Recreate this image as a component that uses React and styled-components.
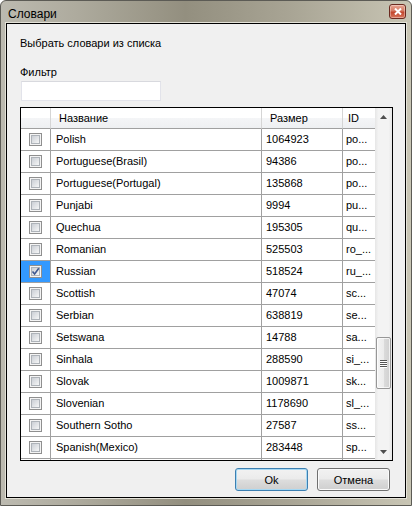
import styled, { createGlobalStyle } from "styled-components";

const GlobalStyle = createGlobalStyle`
  html, body {
    margin: 0;
    padding: 0;
    background: #fff;
  }
  body {
    font-family: "Liberation Sans", Arial, sans-serif;
    font-size: 11px;
    color: #000;
  }
`;

const Window = styled.div`
  width: 412px;
  height: 506px;
  box-sizing: border-box;
  display: flex;
  flex-direction: column;
  padding: 0 5px 7px 5px;
  border: 1px solid #5c5b55;
  border-radius: 6px 6px 0 0;
  background: linear-gradient(
    90deg,
    #bcbab0 0%,
    #aeab9e 18%,
    #938f7f 45%,
    #a8a494 70%,
    #c8c5b4 100%
  );
`;

const TitleBar = styled.div`
  height: 22px;
  display: flex;
  align-items: flex-start;
  justify-content: space-between;
`;

const Title = styled.span`
  font-size: 12px;
  margin: 6px 0 0 2px;
  color: #000;
`;

const CloseButton = styled.div`
  width: 17px;
  height: 15px;
  margin: 3px 0 0 0;
  box-sizing: border-box;
  border: 1px solid #6b2a20;
  border-radius: 3px;
  background: linear-gradient(180deg, #e8a493 0%, #d47a63 45%, #c2452c 55%, #d8765c 100%);
  display: flex;
  align-items: center;
  justify-content: center;
  box-shadow: inset 0 0 0 1px rgba(255, 255, 255, 0.35);
`;

const Client = styled.div`
  flex: 1;
  display: flex;
  flex-direction: column;
  background: #f0f0f0;
  border: 1px solid #000;
  box-shadow: 0 0 0 1px #e4e2d8;
  padding: 12px 0 0 13px;
`;

const Label = styled.div`
  line-height: 14px;
  margin-top: ${(p) => p.top || 0}px;
`;

const FilterInput = styled.div`
  width: 140px;
  height: 20px;
  box-sizing: border-box;
  margin: 2px 0 0 1px;
  background: #fff;
  border: 1px solid #e2e3ea;
  border-top-color: #d8d9de;
`;

const Grid = styled.div`
  width: 373px;
  height: 354px;
  box-sizing: border-box;
  margin-top: 6px;
  border: 1px solid #000;
  background: #fff;
  display: flex;
`;

const TableArea = styled.div`
  flex: 1;
  display: flex;
  flex-direction: column;
  overflow: hidden;
`;

const Row = styled.div`
  display: grid;
  grid-template-columns: 30px 211px 81px 33px;
  height: ${(p) => p.h}px;
  flex-shrink: 0;
`;

const HeadCell = styled.div`
  box-sizing: border-box;
  display: flex;
  align-items: center;
  padding-left: ${(p) => p.pad || 0}px;
  border-right: 1px solid #d5d5d5;
  border-bottom: 1px solid #a0a0a0;
  background: linear-gradient(180deg, #ffffff 0%, #ffffff 50%, #f4f5f7 51%, #eef0f2 100%);
`;

const Cell = styled.div`
  box-sizing: border-box;
  display: flex;
  align-items: center;
  justify-content: ${(p) => (p.center ? "center" : "flex-start")};
  padding-left: ${(p) => p.pad || 0}px;
  padding-bottom: 1px;
  border-right: 1px solid #a0a0a0;
  border-bottom: 1px solid #a0a0a0;
  background: ${(p) => (p.selected ? "#3399ff" : "#fff")};
  white-space: nowrap;
  overflow: hidden;
`;

const CheckBox = styled.div`
  position: relative;
  width: 13px;
  height: 13px;
  box-sizing: border-box;
  border: 1px solid #8f8f8f;
  background: #f4f4f4;
  display: flex;
  align-items: center;
  justify-content: center;
  &::before {
    content: "";
    position: absolute;
    width: 9px;
    height: 9px;
    box-sizing: border-box;
    border: 1px solid #aeb3b9;
    background: linear-gradient(135deg, #cbcfd5 0%, #e4e6e9 60%, #f5f6f7 100%);
  }
`;

const Tick = styled.svg`
  position: relative;
  z-index: 1;
`;

const ScrollBar = styled.div`
  width: 17px;
  display: flex;
  flex-direction: column;
  background: linear-gradient(90deg, #e6e6e6 0%, #f3f3f3 20%, #f3f3f3 80%, #e6e6e6 100%);
`;

const ArrowButton = styled.div`
  height: 17px;
  display: flex;
  align-items: center;
  justify-content: center;
`;

const Track = styled.div`
  flex: 1;
  display: flex;
  flex-direction: column;
  padding-top: 212px;
`;

const Thumb = styled.div`
  width: 15px;
  height: 52px;
  margin-left: 1px;
  box-sizing: border-box;
  border: 1px solid #979797;
  border-radius: 2px;
  background: linear-gradient(90deg, #f4f4f4 0%, #ececec 50%, #dcdcdc 51%, #d0d0d0 100%);
  box-shadow: inset 0 0 0 1px rgba(255, 255, 255, 0.7);
  display: flex;
  flex-direction: column;
  align-items: center;
  justify-content: center;
  gap: 1px;
`;

const Grip = styled.span`
  width: 7px;
  height: 1px;
  background: #555;
  box-shadow: 0 1px 0 #fff;
`;

const ButtonRow = styled.div`
  display: flex;
  justify-content: flex-end;
  gap: 9px;
  margin: 7px 15px 0 0;
`;

const Button = styled.div`
  width: 73px;
  height: 23px;
  box-sizing: border-box;
  display: flex;
  align-items: center;
  justify-content: center;
  border: 1px solid ${(p) => (p.primary ? "#3c7fb1" : "#707070")};
  border-radius: 3px;
  background: linear-gradient(180deg, #f2f2f2 0%, #ebebeb 48%, #dddddd 52%, #cfcfcf 100%);
  box-shadow: inset 0 0 0 1px ${(p) => (p.primary ? "#a6d8f3" : "#fbfbfb")};
  font-size: 11px;
`;

const rows = [
  ["Polish", "1064923", "po..."],
  ["Portuguese(Brasil)", "94386", "po..."],
  ["Portuguese(Portugal)", "135868", "po..."],
  ["Punjabi", "9994", "pu..."],
  ["Quechua", "195305", "qu..."],
  ["Romanian", "525503", "ro_..."],
  ["Russian", "518524", "ru_...", true],
  ["Scottish", "47074", "sc..."],
  ["Serbian", "638819", "se..."],
  ["Setswana", "14788", "sa..."],
  ["Sinhala", "288590", "si_..."],
  ["Slovak", "1009871", "sk..."],
  ["Slovenian", "1178690", "sl_..."],
  ["Southern Sotho", "27587", "ss..."],
  ["Spanish(Mexico)", "283448", "sp..."],
];

const Arrow = ({ down }) => (
  <svg width="7" height="4" viewBox="0 0 7 4">
    <path d={down ? "M0 0 H7 L3.5 4 Z" : "M0 4 H7 L3.5 0 Z"} fill="#4f4f4f" />
  </svg>
);

const App = () => {
  return (
    <Window>
      <GlobalStyle />
      <TitleBar>
        <Title>Словари</Title>
        <CloseButton>
          <svg width="8" height="7" viewBox="0 0 8 7">
            <path d="M1 0.5 L7 6.5 M7 0.5 L1 6.5" stroke="#fff" strokeWidth="2" />
          </svg>
        </CloseButton>
      </TitleBar>
      <Client>
        <Label>Выбрать словари из списка</Label>
        <Label top={15}>Фильтр</Label>
        <FilterInput />
        <Grid>
          <TableArea>
            <Row h={21}>
              <HeadCell />
              <HeadCell pad={8}>Название</HeadCell>
              <HeadCell pad={8}>Размер</HeadCell>
              <HeadCell pad={5}>ID</HeadCell>
            </Row>
            {rows.map(([name, size, id, checked]) => (
              <Row h={22} key={name}>
                <Cell center selected={checked}>
                  <CheckBox>
                    {checked && (
                      <Tick width="9" height="9" viewBox="0 0 9 9">
                        <path
                          d="M1.5 4.5 L3.6 7 L7.8 1.2"
                          stroke="#3f5890"
                          strokeWidth="1.6"
                          fill="none"
                        />
                      </Tick>
                    )}
                  </CheckBox>
                </Cell>
                <Cell pad={5}>{name}</Cell>
                <Cell pad={4}>{size}</Cell>
                <Cell pad={3}>{id}</Cell>
              </Row>
            ))}
            <Row h={22}>
              <Cell />
              <Cell />
              <Cell />
              <Cell />
            </Row>
          </TableArea>
          <ScrollBar>
            <ArrowButton>
              <Arrow />
            </ArrowButton>
            <Track>
              <Thumb>
                <Grip />
                <Grip />
                <Grip />
                <Grip />
              </Thumb>
            </Track>
            <ArrowButton>
              <Arrow down />
            </ArrowButton>
          </ScrollBar>
        </Grid>
        <ButtonRow>
          <Button primary>Ok</Button>
          <Button>Отмена</Button>
        </ButtonRow>
      </Client>
    </Window>
  );
};

export default App;
